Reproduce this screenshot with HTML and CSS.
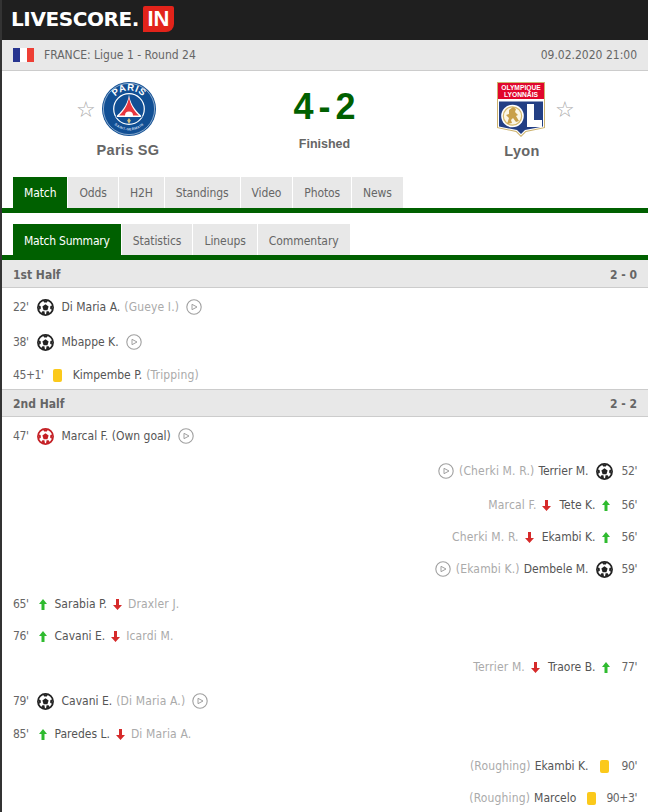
FILE: index.html
```html
<!DOCTYPE html>
<html lang="en">
<head>
<meta charset="utf-8">
<title>Paris SG - Lyon</title>
<link rel="stylesheet" href="styles.css">
</head>
<body>
<svg class="defs" width="0" height="0" aria-hidden="true">
  <defs>
    <symbol id="ball" viewBox="0 0 17 17">
      <circle cx="8.500" cy="8.500" r="7.600" fill="#fff" stroke="currentColor" stroke-width="1.700"/>
      <path d="M8.500 5.300l3.100 2.250-1.200 3.650H6.600L5.400 7.550z" fill="currentColor"/>
      <path d="M6 1.500h5l-1.200 1.900H7.200zM15.600 6.300l-1 4.600-1.500-1.500.3-2.400zM1.400 6.300l1 4.600 1.500-1.500-.3-2.400zM4 14.600l1.400-2.300h2l.6 3.300zM13 14.600l-1.400-2.300h-2l-.6 3.300z" fill="currentColor"/>
    </symbol>
    <symbol id="play" viewBox="0 0 16 16">
      <circle cx="8" cy="8" r="7.200" fill="none" stroke="#a0a0a0" stroke-width="1.100"/>
      <path d="M6 5.300l5 2.700-5 2.700z" fill="none" stroke="#a0a0a0" stroke-width="1"/>
    </symbol>
    <symbol id="up" viewBox="0 0 8 11">
      <path d="M4 0l4 5H5.500v6h-3V5H0z" fill="#2fbb2f"/>
    </symbol>
    <symbol id="down" viewBox="0 0 9 11">
      <path d="M4.500 11L9 6H6V0H3v6H0z" fill="#d62a2a"/>
    </symbol>
    <path id="psgTopArc" d="M8.500 27a18.500 18.500 0 0 1 37 0"/>
    <path id="psgBottomArc" d="M5.500 27a21.500 21.500 0 0 0 43 0"/>
  </defs>
</svg>
<div class="page">
  <header class="topbar">
    <span class="logo-text">LIVESCORE.</span><span class="logo-in">IN</span>
  </header>
  <div class="league">
    <div class="league-name">
      <svg class="flag" viewBox="0 0 21 14"><rect width="7" height="14" fill="#27358f"/><rect x="7" width="7" height="14" fill="#fff"/><rect x="14" width="7" height="14" fill="#ee3f35"/></svg>
      <span>FRANCE: Ligue 1 - Round 24</span>
    </div>
    <span>09.02.2020 21:00</span>
  </div>
  <section class="match">
    <div class="team team-home">
      <span class="star star-home">☆</span>
      <svg class="crest psg" viewBox="0 0 54 54">
        <circle cx="27" cy="27" r="27" fill="#114f94"/>
        <circle cx="27" cy="27" r="25.600" fill="none" stroke="#dfe9f4" stroke-width=".6"/>
        <circle cx="27" cy="27" r="15.300" fill="#114f94" stroke="#fff" stroke-width="1.200"/>
        <path d="M13 34.500h28L34 39a14 14 0 0 1-14 0z" fill="#114f94"/>
        <path d="M27 12.500c1 8 5 15 12 21v1.500H15v-1.500c7-6 11-13 12-21z" fill="#fff"/>
        <path d="M27 15c1 7 4 13 10 18.500h-6a4 4 0 0 0-8 0h-6C23 28 26 22 27 15z" fill="#e8363f"/>
        <path d="M27 36l1.800 2.500L27 42l-1.800-3.500z" fill="#d9c27e"/>
        <text class="psg-top"><textPath href="#psgTopArc" startOffset="50%" text-anchor="middle">PARIS</textPath></text>
        <text class="psg-bottom"><textPath href="#psgBottomArc" startOffset="50%" text-anchor="middle">SAINT-GERMAIN</textPath></text>
      </svg>
      <div class="team-name">Paris SG</div>
    </div>
    <div class="score-box">
      <div class="score">4 - 2</div>
      <div class="status">Finished</div>
    </div>
    <div class="team team-away">
      <svg class="crest ol" viewBox="0 0 48 55">
        <path d="M0 0h48v46L29 50l-5 5-5-5-19-4z" fill="#cdb36f"/>
        <path d="M1 1h46v44.200L28.500 49 24 53.500 19.500 49 1 45.200z" fill="#fff"/>
        <rect x="1" y="1" width="46" height="16" fill="#e1062c"/>
        <text class="ol-top" x="24" y="8.200" text-anchor="middle">OLYMPIQUE</text>
        <text class="ol-top" x="24" y="15.200" text-anchor="middle">LYONNAIS</text>
        <path d="M2 19.500h44v25L28 48l-4 4-4-4-18-3.500z" fill="#233f84"/>
        <circle cx="15.500" cy="34" r="11.300" fill="#fff"/>
        <circle cx="15.500" cy="34" r="9.800" fill="#d6b869"/>
        <circle cx="15.500" cy="34" r="8.600" fill="#fbf6e6"/>
        <path d="M10 42l2-6-3-3 3-1 0-4 4-3 3 2-1 3 3 3-2 1 3 5-3 1-3-4-2 2 1 3z" fill="#c9a04a"/>
        <path d="M30 22h7v16h8v7H30z" fill="#fff"/>
      </svg>
      <span class="star star-away">☆</span>
      <div class="team-name">Lyon</div>
    </div>
  </section>
  <nav class="tabs tabs-main">
    <a class="tab active">Match</a><a class="tab">Odds</a><a class="tab">H2H</a><a class="tab">Standings</a><a class="tab">Video</a><a class="tab">Photos</a><a class="tab">News</a>
  </nav>
  <nav class="tabs tabs-sub">
    <a class="tab active">Match Summary</a><a class="tab">Statistics</a><a class="tab">Lineups</a><a class="tab">Commentary</a>
  </nav>
  <div class="period period-first"><span>1st Half</span><span>2 - 0</span></div>
  <div class="row g5"><span class="min">22'</span><svg class="ball"><use href="#ball"/></svg><span class="name">Di Maria A.</span><span class="sec">(Gueye I.)</span><svg class="play"><use href="#play"/></svg></div>
  <div class="row g7"><span class="min">38'</span><svg class="ball"><use href="#ball"/></svg><span class="name">Mbappe K.</span><svg class="play"><use href="#play"/></svg></div>
  <div class="row g5"><span class="min">45+1'</span><i class="card"></i><span class="name">Kimpembe P.</span><span class="sec">(Tripping)</span></div>
  <div class="period"><span>2nd Half</span><span>2 - 2</span></div>
  <div class="row g5"><span class="min">47'</span><svg class="ball own"><use href="#ball"/></svg><span class="name">Marcal F. (Own goal)</span><svg class="play"><use href="#play"/></svg></div>
  <div class="row g7 away"><svg class="play"><use href="#play"/></svg><span class="sec">(Cherki M. R.)</span><span class="name">Terrier M.</span><svg class="ball"><use href="#ball"/></svg><span class="min">52'</span></div>
  <div class="row g6 away"><span class="sec">Marcal F.</span><svg class="down"><use href="#down"/></svg><span class="name">Tete K.</span><svg class="up"><use href="#up"/></svg><span class="min">56'</span></div>
  <div class="row g4 away"><span class="sec">Cherki M. R.</span><svg class="down"><use href="#down"/></svg><span class="name">Ekambi K.</span><svg class="up"><use href="#up"/></svg><span class="min">56'</span></div>
  <div class="row g4 away"><svg class="play"><use href="#play"/></svg><span class="sec">(Ekambi K.)</span><span class="name">Dembele M.</span><svg class="ball"><use href="#ball"/></svg><span class="min">59'</span></div>
  <div class="row g7"><span class="min">65'</span><svg class="up"><use href="#up"/></svg><span class="name">Sarabia P.</span><svg class="down"><use href="#down"/></svg><span class="sec">Draxler J.</span></div>
  <div class="row g4"><span class="min">76'</span><svg class="up"><use href="#up"/></svg><span class="name">Cavani E.</span><svg class="down"><use href="#down"/></svg><span class="sec">Icardi M.</span></div>
  <div class="row g3 away"><span class="sec">Terrier M.</span><svg class="down"><use href="#down"/></svg><span class="name">Traore B.</span><svg class="up"><use href="#up"/></svg><span class="min">77'</span></div>
  <div class="row g6"><span class="min">79'</span><svg class="ball"><use href="#ball"/></svg><span class="name">Cavani E.</span><span class="sec">(Di Maria A.)</span><svg class="play"><use href="#play"/></svg></div>
  <div class="row g5"><span class="min">85'</span><svg class="up"><use href="#up"/></svg><span class="name">Paredes L.</span><svg class="down"><use href="#down"/></svg><span class="sec">Di Maria A.</span></div>
  <div class="row g4 away"><span class="sec">(Roughing)</span><span class="name">Ekambi K.</span><i class="card"></i><span class="min">90'</span></div>
  <div class="row g4 away"><span class="sec">(Roughing)</span><span class="name">Marcelo</span><i class="card card-long"></i><span class="min">90+3'</span></div>
</div>
</body>
</html>
```
FILE: styles.css
```css
* { box-sizing: border-box; }
html, body { margin: 0; padding: 0; background: #fff; overflow: hidden; height: 812px; }
body { font: 12px "DejaVu Sans Condensed", "DejaVu Sans", sans-serif; color: #555; }
.defs { position: absolute; }
.page { width: 648px; height: 812px; overflow: hidden; border-left: 2px solid #333; }
.topbar { height: 40px; background: #1f1f1f; margin-left: -1px; padding: 6px 0 0 10px; display: flex; align-items: flex-start; }
.logo-text { font: 700 20px/27px "DejaVu Sans", sans-serif; color: #fff; letter-spacing: -.4px; width: 132px; }
.logo-in { background: #e2231a; color: #fff; font: 700 22px/26px "Liberation Sans", sans-serif; width: 31px; height: 26px; text-align: center; border-radius: 2px 2px 8px 0; }
.league { height: 31px; background: #e8e8e8; border-bottom: 1px solid #ccc; display: flex; justify-content: space-between; align-items: center; padding: 0 11px; color: #666; }
.league-name { display: flex; align-items: center; gap: 10px; }
.flag { width: 21px; height: 14px; }
.match { position: relative; height: 106px; }
.team { position: absolute; top: 11px; width: 120px; }
.team-home { left: 66px; }
.team-away { left: 435px; }
.crest { position: absolute; }
.psg { width: 54px; height: 54px; left: 34px; top: 0; }
.ol { width: 48px; height: 55px; left: 60px; top: 0; }
.star { position: absolute; font: 22px/22px "DejaVu Sans", sans-serif; color: #aaa; top: 17px; }
.star-home { left: 8px; }
.star-away { left: 118px; }
.team-name { position: absolute; top: 58px; left: 0; width: 120px; text-align: center; font: 700 14.500px/20px "Liberation Sans", sans-serif; color: #666; letter-spacing: .3px; }
.team-away .team-name { left: 25px; top: 59px; }
.psg-top { font: 700 9.500px "Liberation Sans", sans-serif; fill: #fff; letter-spacing: .6px; }
.psg-bottom { font: 700 3.500px "Liberation Sans", sans-serif; fill: #cfdff0; letter-spacing: .3px; }
.ol-top { font: 700 6.700px "Liberation Sans", sans-serif; fill: #fff; }
.score-box { position: absolute; left: 260px; top: 16px; width: 125px; text-align: center; }
.score { font: 700 36px/40px "Liberation Sans", sans-serif; color: #006000; word-spacing: -5px; }
.status { font: 700 12.500px/16px "Liberation Sans", sans-serif; color: #666; margin-top: 9px; }
.tabs { display: flex; gap: 1px; padding-left: 11px; border-bottom: 5px solid #006000; }
.tabs-main { height: 36px; letter-spacing: -.1px; }
.tabs-sub { height: 36px; margin-top: 11px; letter-spacing: -.06px; }
.tabs-sub .active { letter-spacing: -.22px; }
.tab { background: #e8e8e8; color: #666; padding: 0 11px; line-height: 31px; height: 31px; }
.tabs-main .tab { padding-top: 1px; }
.tabs-sub .tab { padding-top: 2px; }
.tab.active { background: #006000; color: #fff; }
.period { height: 28px; background: #e8e8e8; border-top: 1px solid #ccc; border-bottom: 1px solid #ccc; display: flex; justify-content: space-between; align-items: center; padding: 2px 11px 0; font-weight: 700; color: #666; }
.period-first { border-top: 0; }
.row { display: flex; align-items: center; height: 28px; padding: 0 11px; white-space: pre; color: #555; }
.g3 { margin-top: 3px; }
.g4 { margin-top: 4px; }
.g5 { margin-top: 5px; }
.g6 { margin-top: 6px; }
.g7 { margin-top: 7px; }
.away { justify-content: flex-end; }
.min { color: #666; margin-right: 8px; letter-spacing: -.4px; }
.away .min { margin: 0 0 0 9px; }
.sec { color: #aaa; letter-spacing: .15px; }
.name + .sec { margin-left: 4px; }
.sec + .name { margin-left: 4px; }
.ball { width: 17px; height: 17px; color: #222; margin-right: 8px; }
.away .ball { margin: 0 0 0 7px; }
.own { color: #c41f24; }
.play { width: 16px; height: 16px; margin-left: 7px; }
.away .play { margin: 0 5px 0 0; }
.up { width: 8px; height: 11px; margin: 0 8px 0 2px; }
.away .up { margin: 0 3px 0 6px; }
.down { width: 9px; height: 11px; margin: 0 6px; }
.away .down { margin: 0 8px 0 6px; }
.card { display: inline-block; width: 9px; height: 13px; background: #fbc91b; border-radius: 2px; margin: 0 11px 0 1px; }
.away .card { margin: 0 4px 0 11px; }
.away .card-long { margin-right: 1px; }
```
